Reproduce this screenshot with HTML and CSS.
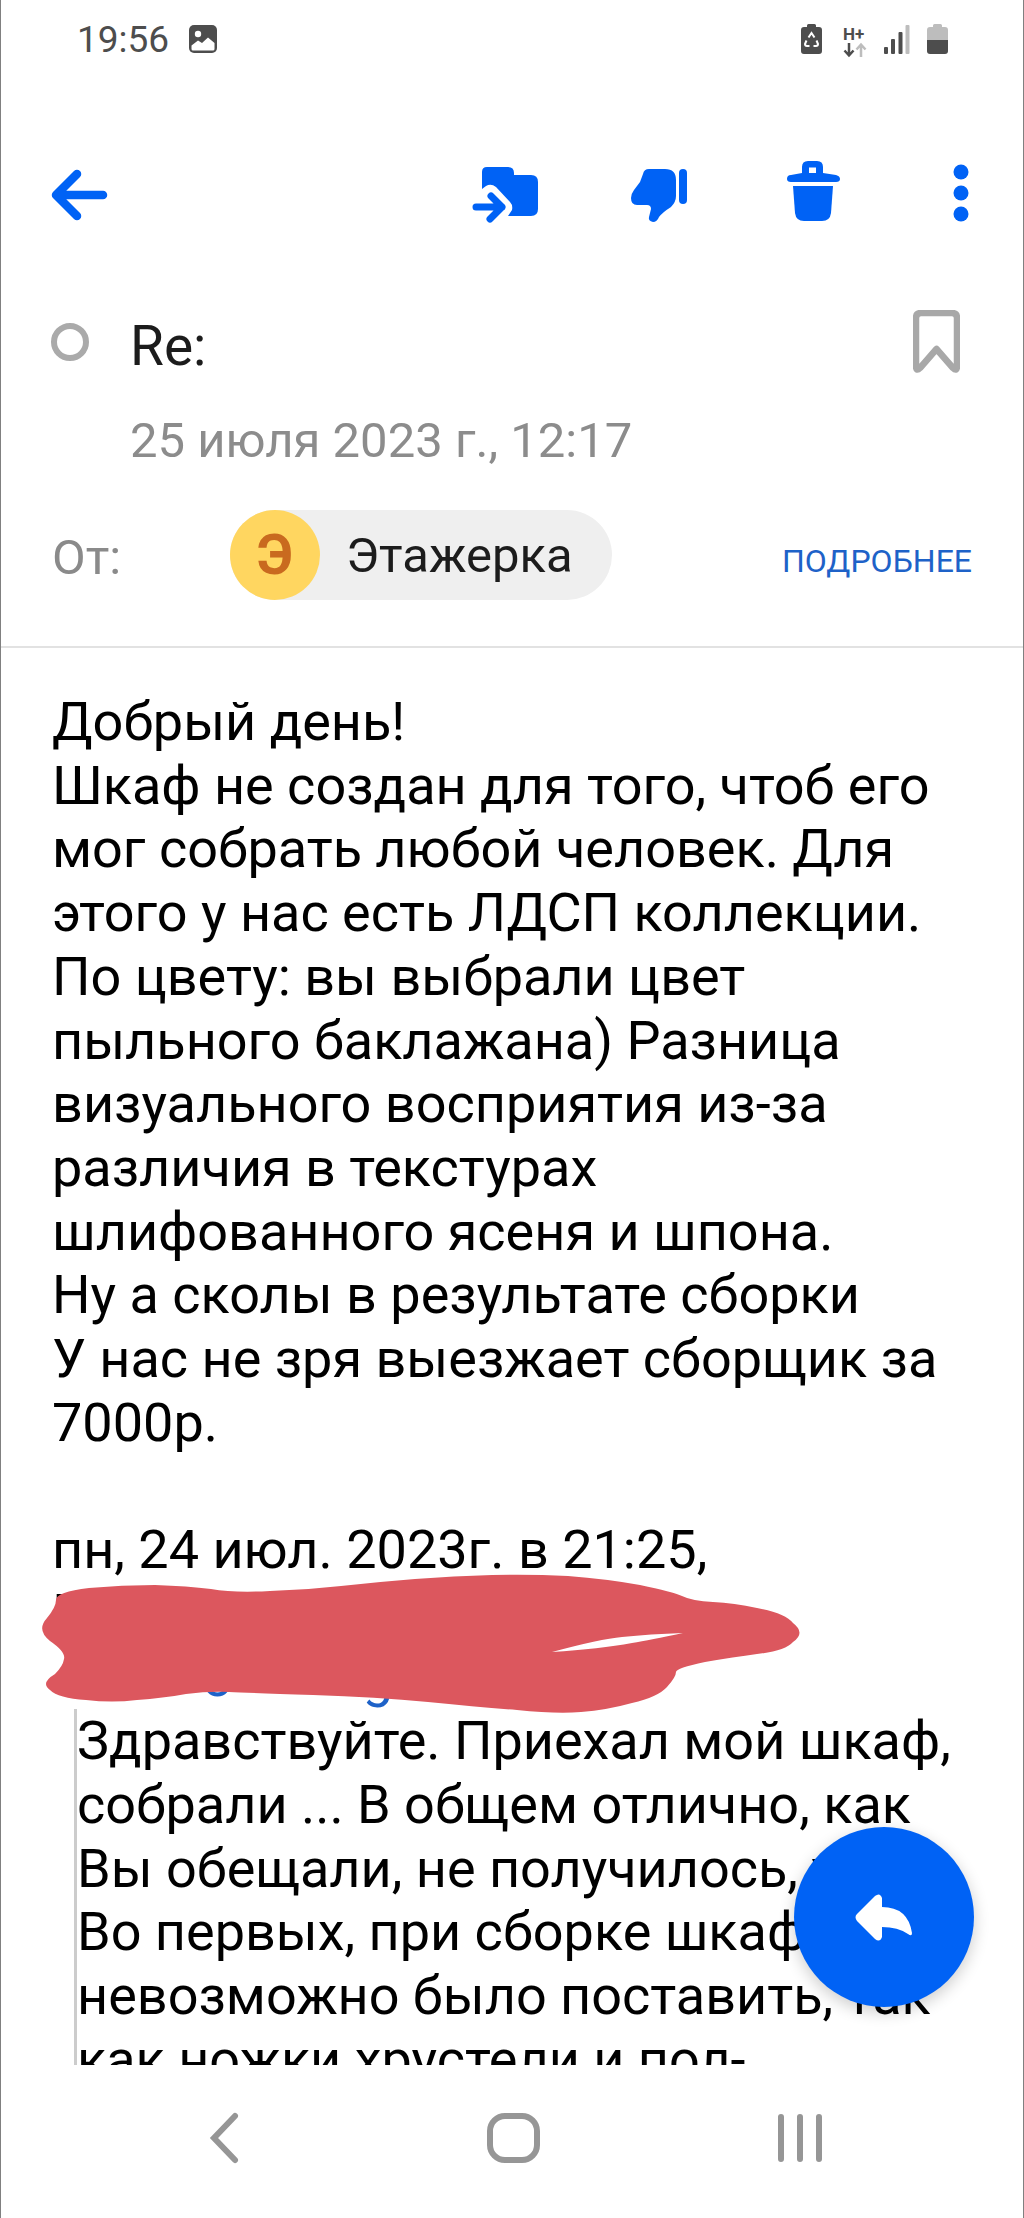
FILE: index.html
```html
<!DOCTYPE html>
<html lang="ru">
<head>
    <meta charset="UTF-8">
    <meta name="viewport" content="width=device-width, initial-scale=1.0">
    <title>Re:</title>
    <link rel="stylesheet" href="styles.css">
</head>
<body>
    <div class="phone">
        <div class="status-bar">
            <span class="clock">19:56</span>
            <svg class="status-pic" width="28" height="28" viewBox="0 0 28 28">
                <rect width="28" height="28" rx="5" fill="#4d4d4d"/>
                <circle cx="9" cy="9" r="3.2" fill="#fff"/>
                <path d="M2.5 24V20.5L9 15.5L13 18L19 12.5L25.5 18V24Q25.5 25.5 24 25.5H4Q2.5 25.5 2.5 24Z" fill="#fff"/>
            </svg>
            <div class="status-right">
                <svg class="status-recycle" width="21" height="30" viewBox="0 0 21 30">
                    <path d="M6 3V1.5Q6 0 7.5 0H13.5Q15 0 15 1.5V3H18Q21 3 21 6V27Q21 30 18 30H3Q0 30 0 27V6Q0 3 3 3Z" fill="#4d4d4d"/>
                    <path d="M7.5 13.5L10.5 9L13.5 13.5M15.5 16.5L17 20Q17 22 15 22H12.5M8.5 22H6Q4 22 4 20L5.5 16.5" fill="none" stroke="#fff" stroke-width="2"/>
                </svg>
                <svg class="status-net" width="26" height="35" viewBox="0 -3 26 35">
                    <text x="0" y="13.500" class="net-label">H+</text>
                    <path d="M6 17V29M1.500 24.500L6 29.500L10.500 24.500" fill="none" stroke="#4d4d4d" stroke-width="2.500"/>
                    <path d="M18 31V19M13.500 23.500L18 18.500L22.500 23.500" fill="none" stroke="#bdbdbd" stroke-width="2.500"/>
                </svg>
                <svg class="status-signal" width="26" height="29" viewBox="0 0 26 29">
                    <rect x="0" y="22" width="4" height="7" rx="1" fill="#4d4d4d"/>
                    <rect x="7" y="14" width="4" height="15" rx="1" fill="#4d4d4d"/>
                    <rect x="14.500" y="7" width="4" height="22" rx="1" fill="#4d4d4d"/>
                    <rect x="21.500" y="0" width="4" height="29" rx="1" fill="#bdbdbd"/>
                </svg>
                <svg class="status-battery" width="21" height="30" viewBox="0 0 21 30">
                    <path d="M6 3V1.500Q6 0 7.500 0H13.500Q15 0 15 1.500V3H18Q21 3 21 6V16H0V6Q0 3 3 3Z" fill="#bdbdbd"/>
                    <path d="M0 16H21V27Q21 30 18 30H3Q0 30 0 27Z" fill="#4d4d4d"/>
                </svg>
            </div>
        </div>

        <div class="toolbar">
            <svg width="64" height="64" viewBox="0 0 64 64">
                <path d="M53 32H6M27 11L6 32L27 53" fill="none" stroke="#0062f5" stroke-width="8.500" stroke-linecap="round" stroke-linejoin="round"/>
            </svg>
            <div class="toolbar-actions">
                <svg width="80" height="80" viewBox="0 0 80 80">
                    <path d="M17 17Q17 12 22 12H43Q49 12 49 18V20H66Q73 20 73 27V54Q73 61 66 61H43L47 55Q48 50 45 47L31 32Q26 28 21 31L17 34Z" fill="#0062f5"/>
                    <path d="M11 52H37M26 41L37 52L25 64" fill="none" stroke="#0062f5" stroke-width="7" stroke-linecap="round" stroke-linejoin="round"/>
                </svg>
                <svg width="80" height="80" viewBox="0 0 80 80">
                    <rect x="60" y="14" width="8" height="35" rx="4" fill="#0062f5"/>
                    <path d="M24 19Q25 14 30 14H46Q57 14 57 25V41Q57 47 52 52Q44 57 40 62Q38 67 34 67Q29 66 30 62L32 54Q32 50 28 50H18Q12 50 12 43Q12 39 15 35L21 27Z" fill="#0062f5"/>
                </svg>
                <svg width="80" height="80" viewBox="0 0 80 80">
                    <path fill-rule="evenodd" d="M14 24Q14 20 18 20L29 18V12Q29 6 35 6H44Q50 6 50 12V18L63 20Q67 21 67 24Q67 27 63 27H18Q14 27 14 24ZM36 12.500V18H43V12.500Z" fill="#0062f5"/>
                    <path d="M20 31H60L58 58Q57 66 49 66H31Q23 66 22 58Z" fill="#0062f5"/>
                </svg>
                <svg width="80" height="80" viewBox="0 0 80 80">
                    <circle cx="34" cy="17" r="7.500" fill="#0062f5"/>
                    <circle cx="34" cy="38" r="7.500" fill="#0062f5"/>
                    <circle cx="34" cy="59" r="7.500" fill="#0062f5"/>
                </svg>
            </div>
        </div>

        <div class="mail-head">
            <div class="subject-row">
                <span class="read-mark"></span>
                <span class="subject">Re:</span>
                <svg class="bookmark" width="47" height="64" viewBox="0 0 47 64">
                    <path d="M3 8Q3 3 8 3H39Q44 3 44 8V56Q44 62 40 58L23.500 39L7 58Q3 62 3 56Z" fill="none" stroke="#a8a8a8" stroke-width="6.500" stroke-linejoin="round"/>
                </svg>
            </div>
            <div class="mail-date">25 июля 2023 г., 12:17</div>
            <div class="from-row">
                <span class="from-label">От:</span>
                <div class="sender-chip">
                    <span class="avatar">Э</span>
                    <span class="sender-name">Этажерка</span>
                </div>
                <span class="more-link">ПОДРОБНЕЕ</span>
            </div>
        </div>

        <div class="mail-body">
            <div class="reply-text">Добрый день!<br>
            Шкаф не создан для того, чтоб его<br>
            мог собрать любой человек. Для<br>
            этого у нас есть ЛДСП коллекции.<br>
            По цвету: вы выбрали цвет<br>
            пыльного баклажана) Разница<br>
            визуального восприятия из-за<br>
            различия в текстурах<br>
            шлифованного ясеня и шпона.<br>
            Ну а сколы в результате сборки<br>
            У нас не зря выезжает сборщик за<br>
            7000р.</div>
            <div class="quote-head">пн, 24 июл. 2023г. в 21:25,<br>
            Г<br>
            <span class="mail-o">o</span><span class="mail-g">g</span></div>
            <div class="quote">Здравствуйте. Приехал мой шкаф,<br>
            собрали ... В общем отлично, как<br>
            Вы обещали, не получилось, у<br>
            Во первых, при сборке шкафа<br>
            невозможно было поставить, так<br>
            как ножки хрустели и пол-</div>
        </div>

        <div class="nav-bar">
            <svg width="60" height="60" viewBox="0 0 60 60">
                <path d="M41 8L20 30L41 52" fill="none" stroke="#969696" stroke-width="6" stroke-linecap="round"/>
            </svg>
            <svg width="60" height="60" viewBox="0 0 60 60">
                <rect x="8" y="8" width="47" height="44" rx="15" fill="none" stroke="#969696" stroke-width="6"/>
            </svg>
            <svg width="60" height="60" viewBox="0 0 60 60">
                <path d="M11 9V51M30 9V51M49 9V51" fill="none" stroke="#969696" stroke-width="6" stroke-linecap="round"/>
            </svg>
        </div>

        <!-- red marker over the address -->
        <svg class="scribble" width="1024" height="2218" viewBox="0 0 1024 2218">
            <path fill-rule="evenodd" fill="#dc575e" d="M56 1600Q56 1592 89 1588Q122 1585 155 1585Q188 1586 211 1589Q234 1593 270 1591Q306 1590 341 1586Q377 1582 415 1579Q454 1576 492 1575Q530 1574 568 1576Q607 1579 640 1585Q673 1592 682 1596Q692 1601 713 1602Q734 1603 757 1608Q785 1613 793 1623Q806 1633 793 1642Q785 1651 757 1654Q734 1657 705 1662Q676 1668 676 1672Q676 1677 667 1687Q658 1697 632 1703Q607 1710 581 1712Q556 1714 517 1710Q479 1707 428 1702Q377 1697 313 1695Q250 1693 229 1692Q209 1691 186 1694Q163 1698 137 1700Q112 1703 86 1700Q58 1698 50 1690Q40 1683 55 1674Q63 1666 64 1659Q66 1652 50 1641Q36 1630 47 1618Q56 1607 56 1600ZM552 1652Q600 1639 622 1637Q650 1634 683 1633Q650 1640 632 1643Q600 1649 552 1652Z"/>
        </svg>

        <div class="reply-fab">
            <svg width="180" height="180" viewBox="0 0 180 180">
                <path d="M63 87L81 69Q86 65 88 71V80Q114 80 118 106Q118 110 114 107Q104 100 88 100V110Q86 116 81 112L63 94Q60 90 63 87Z" fill="#fff"/>
            </svg>
        </div>
    </div>
</body>
</html>
```

FILE: styles.css
```css
* {
    box-sizing: border-box;
}
body {
    margin: 0;
    background: #fff;
    font-family: Roboto, "Noto Sans", sans-serif;
}
svg {
    display: block;
    flex-shrink: 0;
}
.phone {
    position: relative;
    display: flex;
    flex-direction: column;
    width: 1024px;
    height: 2218px;
    overflow: hidden;
    background: #fff;
    border-left: 1px solid #808080;
    border-right: 1px solid #808080;
}

/* status bar */
.status-bar {
    display: flex;
    align-items: center;
    height: 78px;
    padding: 0 75px 0 76px;
    color: #4d4d4d;
}
.clock {
    font-size: 37px;
    line-height: 1;
}
.status-pic {
    margin-left: 20px;
}
.status-right {
    display: flex;
    align-items: center;
    gap: 17px;
    margin-left: auto;
}
.status-net {
    margin: 3px -2px 0 4px;
}
.net-label {
    font-size: 17px;
    font-weight: 700;
    fill: #4d4d4d;
}

/* toolbar */
.toolbar {
    display: flex;
    align-items: center;
    height: 110px;
    margin-top: 62px;
    padding: 0 16px 0 49px;
}
.toolbar-actions {
    display: flex;
    gap: 74px;
    margin-left: auto;
}

/* mail header */
.mail-head {
    height: 398px;
    padding: 47px 0 0;
    border-bottom: 2px solid #e2e2e2;
}
.subject-row {
    display: flex;
    align-items: center;
    height: 90px;
    padding: 0 63px 0 50px;
}
.read-mark {
    width: 38px;
    height: 38px;
    border: 6px solid #aaa;
    border-radius: 50%;
}
.subject {
    margin: 8px 0 0 41px;
    font-size: 55px;
    color: #1c1c1c;
}
.bookmark {
    margin-left: auto;
}
.mail-date {
    margin: 26px 0 0 129px;
    font-size: 49px;
    line-height: 56px;
    color: #8c8c8c;
}
.from-row {
    display: flex;
    align-items: center;
    height: 90px;
    margin-top: 41px;
    padding: 0 51px 0 51px;
}
.from-label {
    width: 178px;
    padding-top: 4px;
    font-size: 49px;
    color: #8a8a8a;
}
.sender-chip {
    display: flex;
    align-items: center;
    width: 382px;
    height: 90px;
    border-radius: 45px;
    background: #efefef;
}
.avatar {
    display: flex;
    align-items: center;
    justify-content: center;
    width: 90px;
    height: 90px;
    border-radius: 50%;
    background: #ffd660;
    color: #c96a1f;
    font-size: 56px;
    font-weight: 700;
}
.sender-name {
    margin-left: 26px;
    font-size: 49px;
    color: #1c1c1c;
}
.more-link {
    margin: 12px 0 0 auto;
    font-size: 32px;
    color: #1e62c8;
}

/* mail text */
.mail-body {
    height: 1417px;
    padding: 42px 0 0 51px;
    overflow: hidden;
    font-size: 54px;
    line-height: 63.7px;
    color: #000;
    white-space: nowrap;
}
.quote-head {
    margin-top: 63.7px;
}
.mail-o,
.mail-g {
    color: #1e62c8;
}
.mail-o {
    margin-left: 150px;
}
.mail-g {
    margin-left: 130px;
}
.quote {
    margin-left: 22px;
    border-left: 3px solid #ccc;
}

/* bottom navigation */
.nav-bar {
    display: flex;
    justify-content: center;
    gap: 228px;
    padding-top: 43px;
}

/* overlays */
.scribble {
    position: absolute;
    top: 0;
    left: -1px;
    pointer-events: none;
}
.reply-fab {
    position: absolute;
    top: 1827px;
    left: 793px;
    width: 180px;
    height: 180px;
    border-radius: 50%;
    background: #0062f5;
    box-shadow: 0 5px 16px rgba(0, 0, 0, 0.2);
}
```
